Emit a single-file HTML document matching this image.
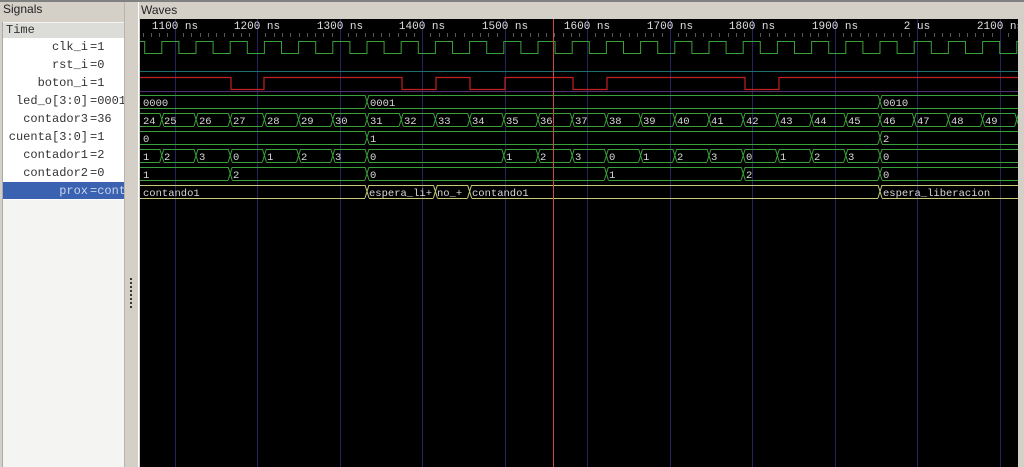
<!DOCTYPE html>
<html><head><meta charset="utf-8"><style>
body{margin:0;width:1024px;height:467px;overflow:hidden;background:#d4d0c8;position:relative;font-family:"Liberation Sans",sans-serif}
#top{position:absolute;left:0;top:0;width:1024px;height:2px;background:#808080}
.lab{position:absolute;font-size:12px;color:#222;background:#d4d0c8;padding:0 2px}
#list{position:absolute;left:2px;top:22px;width:121px;height:445px;background:#f4f4f2;border-left:1px solid #aaa}
#hdr{position:absolute;left:0;top:1px;width:121px;height:15px;background:#dcdcd8;font:12px "Liberation Mono",monospace;color:#333;line-height:15px;padding-left:3px;box-sizing:border-box}
#rows{position:absolute;left:0;top:16px;width:121px;height:162px;background:#fff}
.r{position:absolute;left:0;width:121px;height:18px;font:12px "Liberation Mono",monospace;color:#333;line-height:18px}
.r .n{position:absolute;right:36px;white-space:nowrap}
.r .v{position:absolute;left:87px;white-space:nowrap}
.sel{background:#3a62b0;color:#c8d4ee}
#split{position:absolute;left:124px;top:2px;width:13px;height:465px;background:#d4d0c8;border-left:1px solid #b8b4ac;border-right:1px solid #fff}
svg{position:absolute;left:140px;top:19px}
</style></head><body>
<div id="top"></div>
<div class="lab" style="left:1px;top:2px">Signals</div>
<div class="lab" style="left:139px;top:3px">Waves</div>
<div id="list">
<div id="hdr">Time</div>
<div id="rows">
<div class="r" style="top:0"><span class="n">clk_i</span><span class="v">=1</span></div>
<div class="r" style="top:18px"><span class="n">rst_i</span><span class="v">=0</span></div>
<div class="r" style="top:36px"><span class="n">boton_i</span><span class="v">=1</span></div>
<div class="r" style="top:54px"><span class="n">led_o[3:0]</span><span class="v">=0001</span></div>
<div class="r" style="top:72px"><span class="n">contador3</span><span class="v">=36</span></div>
<div class="r" style="top:90px"><span class="n">cuenta[3:0]</span><span class="v">=1</span></div>
<div class="r" style="top:108px"><span class="n">contador1</span><span class="v">=2</span></div>
<div class="r" style="top:126px"><span class="n">contador2</span><span class="v">=0</span></div>
<div class="r sel" style="top:144px;height:17px"><span class="n">prox</span><span class="v">=cont</span></div>
</div>
</div>
<div id="split"><div style="position:absolute;left:5px;top:276px;width:2px;height:32px;background:repeating-linear-gradient(#333 0 2px,transparent 2px 4px)"></div></div>

<svg width="878" height="448" viewBox="140 19 878 448" xmlns="http://www.w3.org/2000/svg" font-family="Liberation Mono, monospace" font-size="10.5">
<defs>
<g id="tx"><rect x="-2" y="-1" width="4" height="15" fill="#000"/><path d="M-2 0L2 13M-2 13L2 0" stroke="#3aa03a" stroke-width="1" fill="none"/></g>
<g id="ty"><rect x="-2" y="-1" width="4" height="15" fill="#000"/><path d="M-2 0L2 13M-2 13L2 0" stroke="#c8c878" stroke-width="1" fill="none"/></g>
</defs>
<rect x="140" y="19" width="878" height="448" fill="#000"/>
<g stroke="#24245e" stroke-width="1">
<path d="M175.5 19V467M257.5 19V467M340.5 19V467M422.5 19V467M505.5 19V467M587.5 19V467M670.5 19V467M752.5 19V467M835.5 19V467M917.5 19V467M1000.5 19V467"/>
</g>
<g stroke="#555" stroke-width="1">
<path d="M143.5 33V37M151.5 33V37M159.5 33V37M167.5 33V37M183.5 33V37M191.5 33V37M200.5 33V37M208.5 33V37M216.5 33V37M224.5 33V37M233.5 33V37M241.5 33V37M249.5 33V37M265.5 33V37M274.5 33V37M282.5 33V37M290.5 33V37M299.5 33V37M307.5 33V37M315.5 33V37M323.5 33V37M332.5 33V37M348.5 33V37M356.5 33V37M365.5 33V37M373.5 33V37M381.5 33V37M389.5 33V37M398.5 33V37M406.5 33V37M414.5 33V37M430.5 33V37M439.5 33V37M447.5 33V37M455.5 33V37M464.5 33V37M472.5 33V37M480.5 33V37M488.5 33V37M497.5 33V37M513.5 33V37M521.5 33V37M530.5 33V37M538.5 33V37M546.5 33V37M554.5 33V37M563.5 33V37M571.5 33V37M579.5 33V37M595.5 33V37M604.5 33V37M612.5 33V37M620.5 33V37M629.5 33V37M637.5 33V37M645.5 33V37M653.5 33V37M662.5 33V37M678.5 33V37M686.5 33V37M695.5 33V37M703.5 33V37M711.5 33V37M719.5 33V37M728.5 33V37M736.5 33V37M744.5 33V37M760.5 33V37M769.5 33V37M777.5 33V37M785.5 33V37M794.5 33V37M802.5 33V37M810.5 33V37M818.5 33V37M827.5 33V37M843.5 33V37M851.5 33V37M860.5 33V37M868.5 33V37M876.5 33V37M884.5 33V37M893.5 33V37M901.5 33V37M909.5 33V37M925.5 33V37M934.5 33V37M942.5 33V37M950.5 33V37M959.5 33V37M967.5 33V37M975.5 33V37M983.5 33V37M992.5 33V37M1008.5 33V37"/>
</g>
<g fill="#e0e0e0" text-anchor="middle" font-size="11">
<text x="175" y="29">1100 ns</text><text x="257" y="29">1200 ns</text><text x="340" y="29">1300 ns</text><text x="422" y="29">1400 ns</text><text x="505" y="29">1500 ns</text><text x="587" y="29">1600 ns</text><text x="670" y="29">1700 ns</text><text x="752" y="29">1800 ns</text><text x="835" y="29">1900 ns</text><text x="917" y="29">2 us</text><text x="1000" y="29">2100 ns</text>
</g>
<!-- clk -->
<path fill="none" stroke="#3aa03a" stroke-width="1" d="M140 41.5H144.7V53.5H161.8V41.5H178.9V53.5H196V41.5H213.1V53.5H230.2V41.5H247.3V53.5H264.4V41.5H281.5V53.5H298.6V41.5H315.7V53.5H332.8V41.5H349.9V53.5H367V41.5H384.1V53.5H401.2V41.5H418.3V53.5H435.4V41.5H452.5V53.5H469.6V41.5H486.7V53.5H503.8V41.5H520.9V53.5H538V41.5H555.1V53.5H572.2V41.5H589.3V53.5H606.4V41.5H623.5V53.5H640.6V41.5H657.7V53.5H674.8V41.5H691.9V53.5H709V41.5H726.1V53.5H743.2V41.5H760.3V53.5H777.4V41.5H794.5V53.5H811.6V41.5H828.7V53.5H845.8V41.5H862.9V53.5H880V41.5H897.1V53.5H914.2V41.5H931.3V53.5H948.4V41.5H965.5V53.5H982.6V41.5H999.7V53.5H1016.8V41.5H1018"/>
<!-- rst -->
<path d="M140 71.5H1018" stroke="#1e6e6e" stroke-width="1"/>
<!-- boton -->
<path d="M140 91.5H1018" stroke="#50306e" stroke-width="1"/>
<path fill="none" stroke="#c02020" stroke-width="1.2" d="M140 77.5H231V89.5H264V77.5H402V89.5H436V77.5H470V89.5H505V77.5H573V89.5H607V77.5H745V89.5H779V77.5H1018"/>
<!-- buses -->
<g stroke="#3aa03a" stroke-width="1" fill="none">
<path d="M140 95.5H1018M140 108.5H1018"/>
<path d="M140 113.5H1018M140 126.5H1018"/>
<path d="M140 131.5H1018M140 144.5H1018"/>
<path d="M140 149.5H1018M140 162.5H1018"/>
<path d="M140 167.5H1018M140 180.5H1018"/>
</g>
<path d="M140 185.5H1018M140 198.5H1018" stroke="#c8c878" stroke-width="1" fill="none"/>
<use href="#tx" x="367" y="95"/><use href="#tx" x="880" y="95"/>
<g>
<use href="#tx" x="161.8" y="113"/><use href="#tx" x="196" y="113"/><use href="#tx" x="230.2" y="113"/><use href="#tx" x="264.4" y="113"/><use href="#tx" x="298.6" y="113"/><use href="#tx" x="332.8" y="113"/><use href="#tx" x="367" y="113"/><use href="#tx" x="401.2" y="113"/><use href="#tx" x="435.4" y="113"/><use href="#tx" x="469.6" y="113"/><use href="#tx" x="503.8" y="113"/><use href="#tx" x="538" y="113"/><use href="#tx" x="572.2" y="113"/><use href="#tx" x="606.4" y="113"/><use href="#tx" x="640.6" y="113"/><use href="#tx" x="674.8" y="113"/><use href="#tx" x="709" y="113"/><use href="#tx" x="743.2" y="113"/><use href="#tx" x="777.4" y="113"/><use href="#tx" x="811.6" y="113"/><use href="#tx" x="845.8" y="113"/><use href="#tx" x="880" y="113"/><use href="#tx" x="914.2" y="113"/><use href="#tx" x="948.4" y="113"/><use href="#tx" x="982.6" y="113"/><use href="#tx" x="1016.8" y="113"/>
</g>
<use href="#tx" x="367" y="131"/><use href="#tx" x="880" y="131"/>
<g>
<use href="#tx" x="161.8" y="149"/><use href="#tx" x="196" y="149"/><use href="#tx" x="230.2" y="149"/><use href="#tx" x="264.4" y="149"/><use href="#tx" x="298.6" y="149"/><use href="#tx" x="332.8" y="149"/><use href="#tx" x="367" y="149"/><use href="#tx" x="503.8" y="149"/><use href="#tx" x="538" y="149"/><use href="#tx" x="572.2" y="149"/><use href="#tx" x="606.4" y="149"/><use href="#tx" x="640.6" y="149"/><use href="#tx" x="674.8" y="149"/><use href="#tx" x="709" y="149"/><use href="#tx" x="743.2" y="149"/><use href="#tx" x="777.4" y="149"/><use href="#tx" x="811.6" y="149"/><use href="#tx" x="845.8" y="149"/><use href="#tx" x="880" y="149"/>
</g>
<use href="#tx" x="230.2" y="167"/><use href="#tx" x="367" y="167"/><use href="#tx" x="606.4" y="167"/><use href="#tx" x="743.2" y="167"/><use href="#tx" x="880" y="167"/>
<use href="#ty" x="367" y="185"/><use href="#ty" x="435.4" y="185"/><use href="#ty" x="469.6" y="185"/><use href="#ty" x="880" y="185"/>
<g fill="#d8d8d8">
<text x="143" y="106">0000</text><text x="370" y="106">0001</text><text x="883" y="106">0010</text>
<text x="143" y="124">24</text><text x="164" y="124">25</text><text x="199" y="124">26</text><text x="233" y="124">27</text><text x="267" y="124">28</text><text x="301" y="124">29</text><text x="335" y="124">30</text><text x="370" y="124">31</text><text x="404" y="124">32</text><text x="438" y="124">33</text><text x="472" y="124">34</text><text x="506" y="124">35</text><text x="540" y="124">36</text><text x="575" y="124">37</text><text x="609" y="124">38</text><text x="643" y="124">39</text><text x="677" y="124">40</text><text x="711" y="124">41</text><text x="746" y="124">42</text><text x="780" y="124">43</text><text x="814" y="124">44</text><text x="848" y="124">45</text><text x="883" y="124">46</text><text x="917" y="124">47</text><text x="951" y="124">48</text><text x="985" y="124">49</text>
<text x="143" y="142">0</text><text x="370" y="142">1</text><text x="883" y="142">2</text>
<text x="143" y="160">1</text><text x="164" y="160">2</text><text x="199" y="160">3</text><text x="233" y="160">0</text><text x="267" y="160">1</text><text x="301" y="160">2</text><text x="335" y="160">3</text><text x="370" y="160">0</text><text x="506" y="160">1</text><text x="540" y="160">2</text><text x="575" y="160">3</text><text x="609" y="160">0</text><text x="643" y="160">1</text><text x="677" y="160">2</text><text x="711" y="160">3</text><text x="746" y="160">0</text><text x="780" y="160">1</text><text x="814" y="160">2</text><text x="848" y="160">3</text><text x="883" y="160">0</text>
<text x="143" y="178">1</text><text x="233" y="178">2</text><text x="370" y="178">0</text><text x="609" y="178">1</text><text x="746" y="178">2</text><text x="883" y="178">0</text>
<text x="143" y="196">contando1</text><text x="369" y="196">espera_li+</text><text x="437" y="196">no_+</text><text x="472" y="196">contando1</text><text x="883" y="196">espera_liberacion</text>
</g>
<path d="M553.5 19V467" stroke="#d04848" stroke-width="1"/>
</svg>
</body></html>
